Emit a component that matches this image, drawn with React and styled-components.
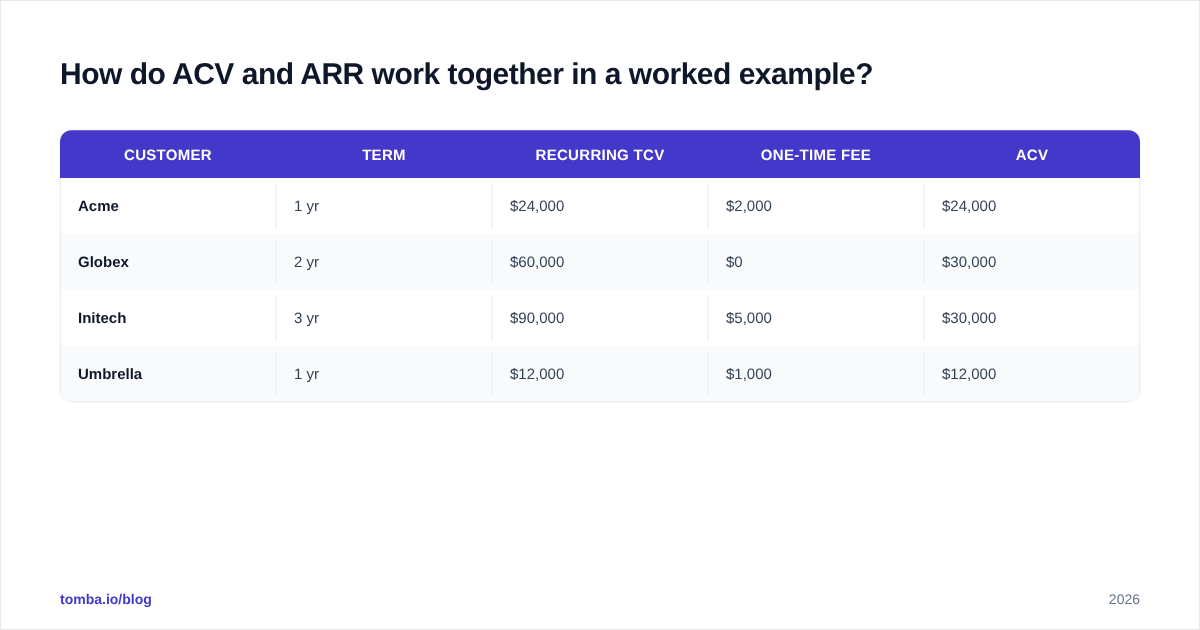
import React from 'react';
import styled, { createGlobalStyle } from 'styled-components';

const columns = ['Customer', 'Term', 'Recurring TCV', 'One-time fee', 'ACV'];

const rows = [
  ['Acme', '1 yr', '$24,000', '$2,000', '$24,000'],
  ['Globex', '2 yr', '$60,000', '$0', '$30,000'],
  ['Initech', '3 yr', '$90,000', '$5,000', '$30,000'],
  ['Umbrella', '1 yr', '$12,000', '$1,000', '$12,000'],
];

const App = () => {
  return (
    <Page>
      <GlobalStyle />
      <Title>How do ACV and ARR work together in a worked example?</Title>
      <Card>
        <HeaderRow>
          {columns.map((name) => (
            <HeaderCell key={name}>{name}</HeaderCell>
          ))}
        </HeaderRow>
        {rows.map((row) => (
          <Row key={row[0]}>
            {row.map((value, i) => (
              <Cell key={i} $first={i === 0}>
                {value}
              </Cell>
            ))}
          </Row>
        ))}
      </Card>
      <Footer>
        <Brand>tomba.io/blog</Brand>
        <Year>2026</Year>
      </Footer>
    </Page>
  );
};

export default App;

const GlobalStyle = createGlobalStyle`
  html, body {
    margin: 0;
    padding: 0;
    background: #fff;
  }
`;

const Page = styled.div`
  box-sizing: border-box;
  width: 1200px;
  height: 630px;
  padding: 56px 59px 22px;
  border: 1px solid #e5e7eb;
  display: flex;
  flex-direction: column;
  font-family: 'Liberation Sans', Arial, sans-serif;
  text-rendering: geometricPrecision;
  background: #fff;
  will-change: transform;
`;

const Title = styled.h1`
  margin: 0 0 37px;
  font-size: 30px;
  line-height: 36px;
  font-weight: 700;
  letter-spacing: -0.5px;
  color: #0f172a;
`;

const Card = styled.div`
  width: 1080px;
  border-radius: 12px;
  overflow: hidden;
  background: #fff;
  box-shadow: 0 0 0 1px rgba(229, 231, 235, 0.3);
`;

const HeaderRow = styled.div`
  display: grid;
  grid-template-columns: repeat(5, 216px);
  box-sizing: border-box;
  height: 48px;
  padding-top: 2px;
  background: #4338ca;
  box-shadow: inset 0 1px 0 rgba(255, 255, 255, 0.25);
`;

const HeaderCell = styled.div`
  display: flex;
  align-items: center;
  justify-content: center;
  font-size: 15px;
  font-weight: 700;
  letter-spacing: 0.3px;
  text-transform: uppercase;
  color: #fff;
`;

const Row = styled.div`
  display: grid;
  grid-template-columns: repeat(5, 216px);
  box-sizing: border-box;
  height: 56px;
  padding: 6px 0;
  background: #fff;
  box-shadow: inset 1px 0 0 #eceef2, inset -1px 0 0 #eceef2;

  &:nth-child(odd) {
    background: #f8fafc;
  }

  &:last-child {
    box-shadow: inset 1px 0 0 #eceef2, inset -1px 0 0 #eceef2, inset 0 -1px 0 #eceef2;
  }
`;

const Cell = styled.div`
  display: flex;
  align-items: center;
  margin-left: ${(p) => (p.$first ? '0' : '-1px')};
  padding-left: ${(p) => (p.$first ? '18px' : '17px')};
  border-left: ${(p) => (p.$first ? 'none' : '2px solid #f1f3f5')};
  font-size: 15px;
  font-weight: ${(p) => (p.$first ? 700 : 400)};
  color: ${(p) => (p.$first ? '#0f172a' : '#334155')};
`;

const Footer = styled.div`
  margin-top: auto;
  display: flex;
  justify-content: space-between;
  align-items: center;
`;

const Brand = styled.span`
  font-size: 14px;
  font-weight: 700;
  color: #4338ca;
`;

const Year = styled.span`
  font-size: 14px;
  color: #64748b;
`;
